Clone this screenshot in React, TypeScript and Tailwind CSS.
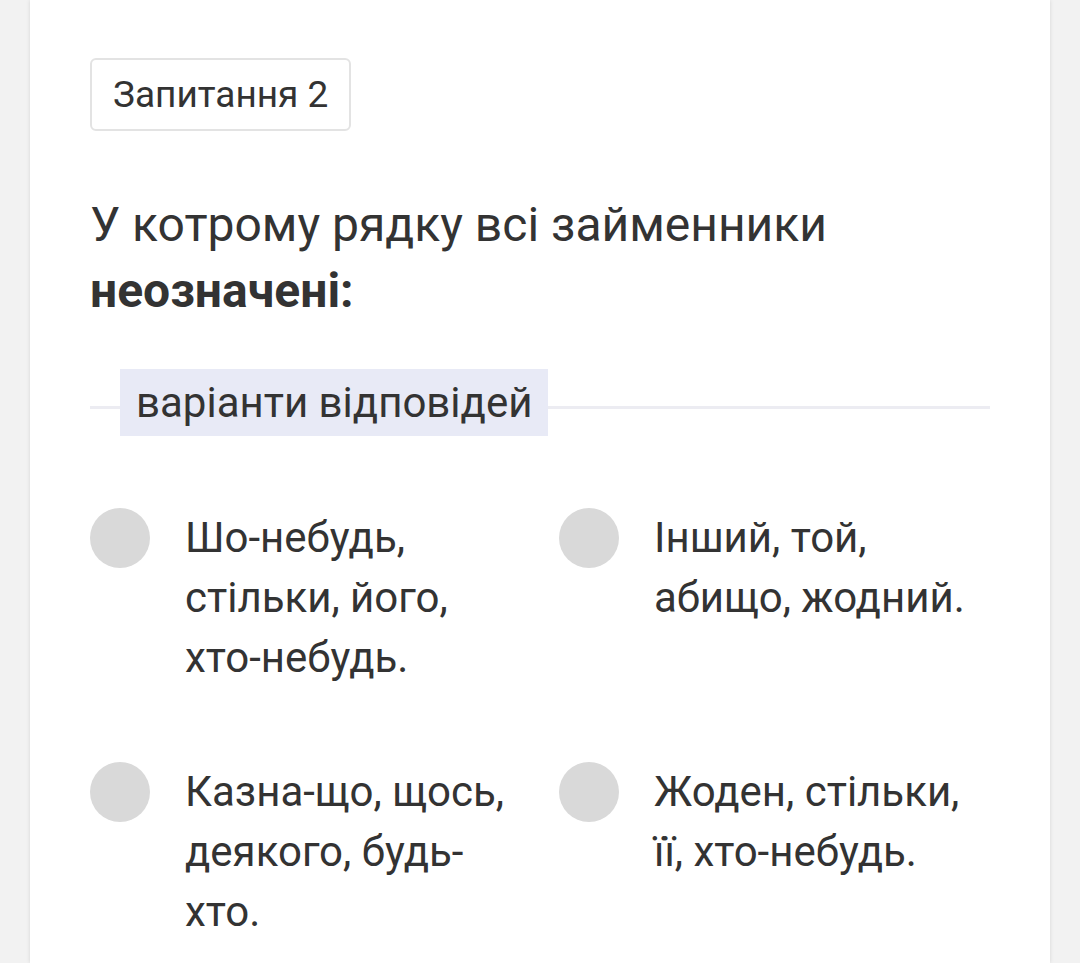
const options = [
  'Шо-небудь, стільки, його, хто-небудь.',
  'Інший, той, абищо, жодний.',
  'Казна-що, щось, деякого, будь-хто.',
  'Жоден, стільки, її, хто-небудь.',
];

export default function App() {
  return (
    <div className="min-h-[963px] bg-[#f2f2f2] px-[30px] font-['Roboto',sans-serif] text-[#333333]">
      <div className="min-h-[963px] bg-white px-[60px] pt-[58px] shadow-[0_0_4px_rgba(0,0,0,0.12)]">
        {/* question number */}
        <div className="inline-flex h-[73px] items-center rounded-[6px] border-2 border-[#e3e3e3] px-[21px] text-[37px]">
          Запитання 2
        </div>

        {/* question text */}
        <p className="mt-[61px] text-[48px] leading-[66px]">
          У котрому рядку всі займенники <b className="font-bold">неозначені:</b>
        </p>

        {/* answers header */}
        <div className="mt-[45px] flex items-center">
          <div className="mt-[9px] h-[3px] w-[30px] bg-[#ececf2]" />
          <div className="flex h-[67px] items-center bg-[#e8eaf6] px-4 text-[42px]">варіанти відповідей</div>
          <div className="mt-[9px] h-[3px] flex-1 bg-[#ececf2]" />
        </div>

        {/* options */}
        <div className="mt-[72px] grid grid-cols-2 gap-x-[38px] gap-y-[74px]">
          {options.map((o) => (
            <div key={o} className="flex items-start gap-[35px]">
              <span className="h-[60px] w-[60px] shrink-0 rounded-full bg-[#d9d9d9]" />
              <span className="text-[42px] leading-[60px]">{o}</span>
            </div>
          ))}
        </div>
      </div>
    </div>
  );
}
